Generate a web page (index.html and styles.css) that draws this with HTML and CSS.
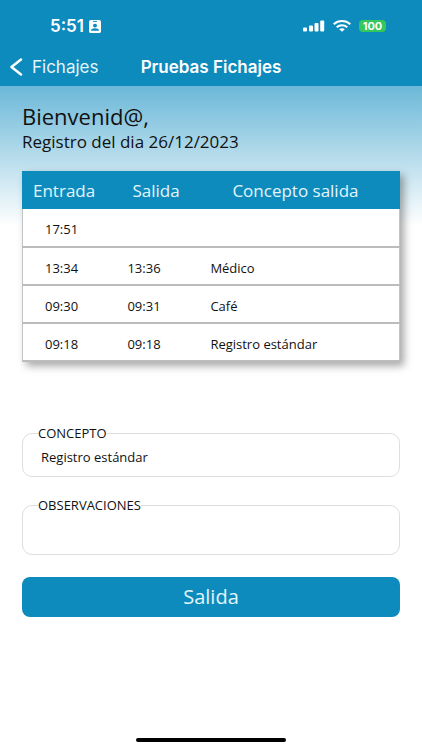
FILE: index.html
```html
<!DOCTYPE html>
<html lang="es">
<head>
    <meta charset="utf-8">
    <meta name="viewport" content="width=device-width, initial-scale=1">
    <title>Pruebas Fichajes</title>
    <link rel="stylesheet" href="styles.css">
</head>
<body>
    <header class="topbar">
        <div class="status">
            <div class="status-left">
                <span class="clock">5:51</span>
                <svg class="badge" width="12" height="13" viewBox="0 0 12 14" preserveAspectRatio="none">
                    <rect width="12" height="14" rx="2" fill="#fff"/>
                    <rect x="4" y="1" width="4" height="1" fill="#0d8bbc"/>
                    <circle cx="6" cy="6" r="2" fill="#0d8bbc"/>
                    <path d="M2 11.500C2 9.500 4 8.800 6 8.800s4 .7 4 2.700z" fill="#0d8bbc"/>
                </svg>
            </div>
            <div class="status-right">
                <svg width="22" height="12" viewBox="0 0 22 12" fill="#fff">
                    <rect x="0" y="7.500" width="4" height="4" rx="1"/>
                    <rect x="6" y="5.500" width="4" height="6" rx="1"/>
                    <rect x="11.500" y="3" width="4" height="8.500" rx="1"/>
                    <rect x="17.200" y="0.500" width="4" height="11" rx="1"/>
                </svg>
                <svg width="18" height="12" viewBox="0 0 18 12" fill="none" stroke="#fff" stroke-width="2">
                    <path d="M.7 4.300C5.300 0 12.700 0 17.300 4.300"/>
                    <path d="M3.700 7.200c3-2.700 7.600-2.700 10.600 0"/>
                    <path d="M6.200 9.200C7.800 7.900 10.200 7.900 11.800 9.200L9 11.800z" fill="#fff" stroke="none"/>
                </svg>
                <span class="battery">100</span>
            </div>
        </div>
        <nav class="nav">
            <a class="back" href="#">
                <svg width="13" height="18" viewBox="0 0 13 18" fill="none" stroke="#fff" stroke-width="2.500" stroke-linecap="round" stroke-linejoin="round">
                    <path d="M11 1.500L1.500 9l9.500 7.500"/>
                </svg>
                Fichajes
            </a>
            <h1 class="title">Pruebas Fichajes</h1>
        </nav>
    </header>

    <main class="content">
        <h2 class="welcome">Bienvenid@,</h2>
        <p class="date">Registro del dia 26/12/2023</p>

        <table class="records">
            <thead>
                <tr>
                    <th>Entrada</th>
                    <th>Salida</th>
                    <th>Concepto salida</th>
                </tr>
            </thead>
            <tbody>
                <tr>
                    <td>17:51</td>
                    <td></td>
                    <td></td>
                </tr>
                <tr>
                    <td>13:34</td>
                    <td>13:36</td>
                    <td>Médico</td>
                </tr>
                <tr>
                    <td>09:30</td>
                    <td>09:31</td>
                    <td>Café</td>
                </tr>
                <tr>
                    <td>09:18</td>
                    <td>09:18</td>
                    <td>Registro estándar</td>
                </tr>
            </tbody>
        </table>

        <form class="form">
            <div class="field">
                <label for="concepto">CONCEPTO</label>
                <select id="concepto">
                    <option>Registro estándar</option>
                    <option>Médico</option>
                    <option>Café</option>
                </select>
            </div>
            <div class="field">
                <label for="observaciones">OBSERVACIONES</label>
                <textarea id="observaciones"></textarea>
            </div>
            <button class="submit" type="button">Salida</button>
        </form>
    </main>

    <div class="home-bar"></div>
</body>
</html>
```
FILE: styles.css
```css
* {
    box-sizing: border-box;
}
body {
    margin: 0;
    min-height: 100vh;
    display: flex;
    flex-direction: column;
    background-color: #fff;
    color: #111;
    font-family: "Open Sans", "Noto Sans", sans-serif;
}

/* top bar */
.topbar {
    height: 86px;
    background-color: #0d8bbc;
    color: #fff;
    font-family: Inter, "Liberation Sans", sans-serif;
}
.status {
    display: flex;
    justify-content: space-between;
    align-items: center;
    height: 48px;
    padding: 4px 36px 0 50px;
}
.status-left, .status-right {
    display: flex;
    align-items: center;
}
.status-left {
    gap: 5px;
}
.status-right {
    gap: 8px;
}
.clock {
    font-size: 17px;
    font-weight: 600;
}
.battery {
    width: 27px;
    height: 12px;
    border-radius: 4px;
    background-color: #34c759;
    font-size: 11px;
    font-weight: 700;
    line-height: 12px;
    text-align: center;
}
.nav {
    display: grid;
    grid-template-columns: 1fr auto 1fr;
    align-items: center;
    height: 38px;
    padding: 0 10px;
}
.back {
    display: flex;
    align-items: center;
    gap: 9px;
    color: #e3f5fc;
    font-size: 17px;
    text-decoration: none;
}
.title {
    margin: 0;
    font-size: 17px;
    font-weight: 600;
}

/* content */
.content {
    flex: 1;
    padding: 15px 22px;
    background: linear-gradient(#6bb8d8, #fff 140px);
}
.welcome {
    margin: 0;
    font-size: 22px;
    font-weight: 400;
    line-height: 30px;
}
.date {
    margin: 0;
    font-size: 17px;
    line-height: 22px;
}
.records {
    width: 100%;
    margin-top: 18px;
    table-layout: fixed;
    border-collapse: collapse;
    background-color: #fff;
    box-shadow: 4px 4px 8px rgba(0, 0, 0, 0.35);
}
.records th, .records td {
    height: 38px;
    padding: 0 0 0 22px;
    text-align: left;
}
.records th {
    height: 37px;
    background-color: #0d8bbc;
    color: #e3f5fc;
    font-size: 17px;
    font-weight: 400;
}
.records th:nth-child(1) {
    width: 22%;
    padding-left: 10px;
}
.records th:nth-child(2) {
    width: 22%;
    padding-left: 27px;
}
.records th:nth-child(3) {
    padding-left: 44px;
}
.records td {
    padding-top: 4px;
    font-size: 13px;
}
.records thead tr {
    border: 1px solid #0d8bbc;
}
.records tbody tr {
    border: 1px solid #c4c4c4;
    border-bottom: 2px solid #bcbcbc;
}

/* form */
.form {
    margin-top: 71px;
}
.field {
    position: relative;
    margin-bottom: 28px;
    border: 1px solid #dedede;
    border-radius: 10px;
}
.field label {
    position: absolute;
    top: -9px;
    left: 15px;
    background-color: #fff;
    font-size: 13px;
    line-height: 16px;
}
.field select, .field textarea {
    display: block;
    width: 100%;
    height: 42px;
    padding: 4px 18px 0;
    border: 0;
    outline: 0;
    background: none;
    color: #111;
    font-family: inherit;
    font-size: 13px;
    appearance: none;
    resize: none;
}
.field textarea {
    height: 48px;
    padding-top: 14px;
}
.field:nth-of-type(2) {
    margin-bottom: 22px;
}
.submit {
    display: block;
    width: 100%;
    height: 40px;
    border: 0;
    border-radius: 8px;
    background-color: #0d8bbc;
    color: #e3f5fc;
    font-family: inherit;
    font-size: 20px;
}

.home-bar {
    width: 150px;
    height: 4px;
    margin: 0 auto 8px;
    border-radius: 2px;
    background-color: #000;
}
```
